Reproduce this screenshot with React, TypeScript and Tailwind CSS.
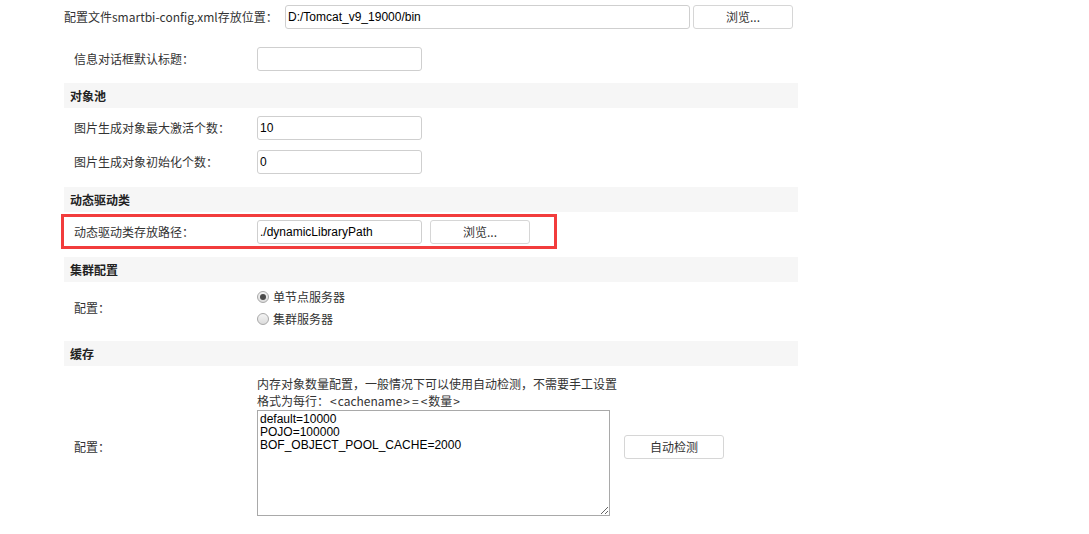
const font = "font-['Noto_Sans_CJK_SC','Microsoft_YaHei',sans-serif]"
const inputFont = "font-['Liberation_Sans','Noto_Sans_CJK_SC',sans-serif]"

function Header({ title }: { title: string }) {
  return (
    <div className="h-[25px] bg-[#f6f6f6] flex items-center pl-[6px] text-[12px] font-bold text-[#222]">
      {title}
    </div>
  )
}

function TextInput({ value = '', w = 'w-[165px]' }: { value?: string; w?: string }) {
  return (
    <div className={`${w} h-6 border border-[#cfcfcf] rounded-[3px] bg-white flex items-center px-[2px] text-[12px] text-black ${inputFont}`}>
      {value}
    </div>
  )
}

function Btn({ label, w = 'w-[100px]' }: { label: string; w?: string }) {
  return (
    <div className={`${w} h-6 border border-[#d6d6d6] rounded-[3px] bg-white flex items-center justify-center text-[12px] text-[#333]`}>
      {label}
    </div>
  )
}

function Radio({ checked, label }: { checked?: boolean; label: string }) {
  return (
    <div className="flex items-center h-[20px]">
      <span className="w-[12px] h-[12px] rounded-full border border-[#a8a8a8] bg-gradient-to-b from-[#f4f4f4] to-[#dcdcdc] flex items-center justify-center">
        {checked && <span className="w-[6px] h-[6px] rounded-full bg-[#4a4a4a]" />}
      </span>
      <span className="ml-[4px] text-[12px] text-[#333]">{label}</span>
    </div>
  )
}

function Row({ label, children }: { label: string; children: React.ReactNode }) {
  return (
    <div className="flex items-center">
      <div className="w-[193px] pl-[10px] text-[12px] text-[#333]">{label}</div>
      {children}
    </div>
  )
}

export default function App() {
  return (
    <div className={`w-[1089px] h-[534px] bg-white overflow-hidden ${font}`}>
      <div className="ml-[64px] w-[734px] flex flex-col">
        <div className="h-[34px] flex items-center">
          <div className="w-[221px] text-[12px] text-[#333]">配置文件smartbi-config.xml存放位置：</div>
          <TextInput value="D:/Tomcat_v9_19000/bin" w="w-[405px]" />
          <div className="ml-[3px]"><Btn label="浏览..." /></div>
        </div>

        <div className="h-[49px] flex items-center pt-[1px]">
          <Row label="信息对话框默认标题：">
            <TextInput />
          </Row>
        </div>

        <Header title="对象池" />
        <div className="pt-[8px] pb-[13px] flex flex-col gap-[10px]">
          <Row label="图片生成对象最大激活个数：">
            <TextInput value="10" />
          </Row>
          <Row label="图片生成对象初始化个数：">
            <TextInput value="0" />
          </Row>
        </div>

        <Header title="动态驱动类" />
        <div className="mt-[2px] -ml-[3px] w-[496px] h-[35px] border-[3px] border-[#f23c3c] flex items-center">
          <Row label="动态驱动类存放路径：">
            <TextInput value="./dynamicLibraryPath" />
            <div className="ml-[8px]"><Btn label="浏览..." /></div>
          </Row>
        </div>

        <div className="mt-[8px]"><Header title="集群配置" /></div>
        <div className="h-[59px] flex items-center pb-[7px]">
          <Row label="配置：">
            <div className="flex flex-col gap-[2px]">
              <Radio checked label="单节点服务器" />
              <Radio label="集群服务器" />
            </div>
          </Row>
        </div>

        <Header title="缓存" />
        <div className="flex items-start pt-[9px]">
          <div className="w-[193px] pl-[10px] text-[12px] text-[#333] mt-[63px]">配置：</div>
          <div className="w-[367px] flex flex-col">
            <div className="text-[12px] text-[#333] leading-[18px]">内存对象数量配置，一般情况下可以使用自动检测，不需要手工设置</div>
            <div className="text-[12px] text-[#333] leading-[18px] -mt-[1px]">
              格式为每行：<span className="mx-[1px]">&lt;</span>cachename<span className="mx-[1px]">&gt;</span><span className="mx-[1px]">=</span><span className="mx-[1px]">&lt;</span>数量<span className="mx-[1px]">&gt;</span>
            </div>
            <textarea
              readOnly
              defaultValue={'default=10000\nPOJO=100000\nBOF_OBJECT_POOL_CACHE=2000'}
              className={`w-[353px] h-[106px] border border-[#a9a9a9] px-[2px] pt-[2px] pb-0 text-[12px] leading-[13px] text-black outline-none resize ${inputFont}`}
            />
          </div>
          <div className="mt-[60px]"><Btn label="自动检测" /></div>
        </div>
      </div>
    </div>
  )
}
